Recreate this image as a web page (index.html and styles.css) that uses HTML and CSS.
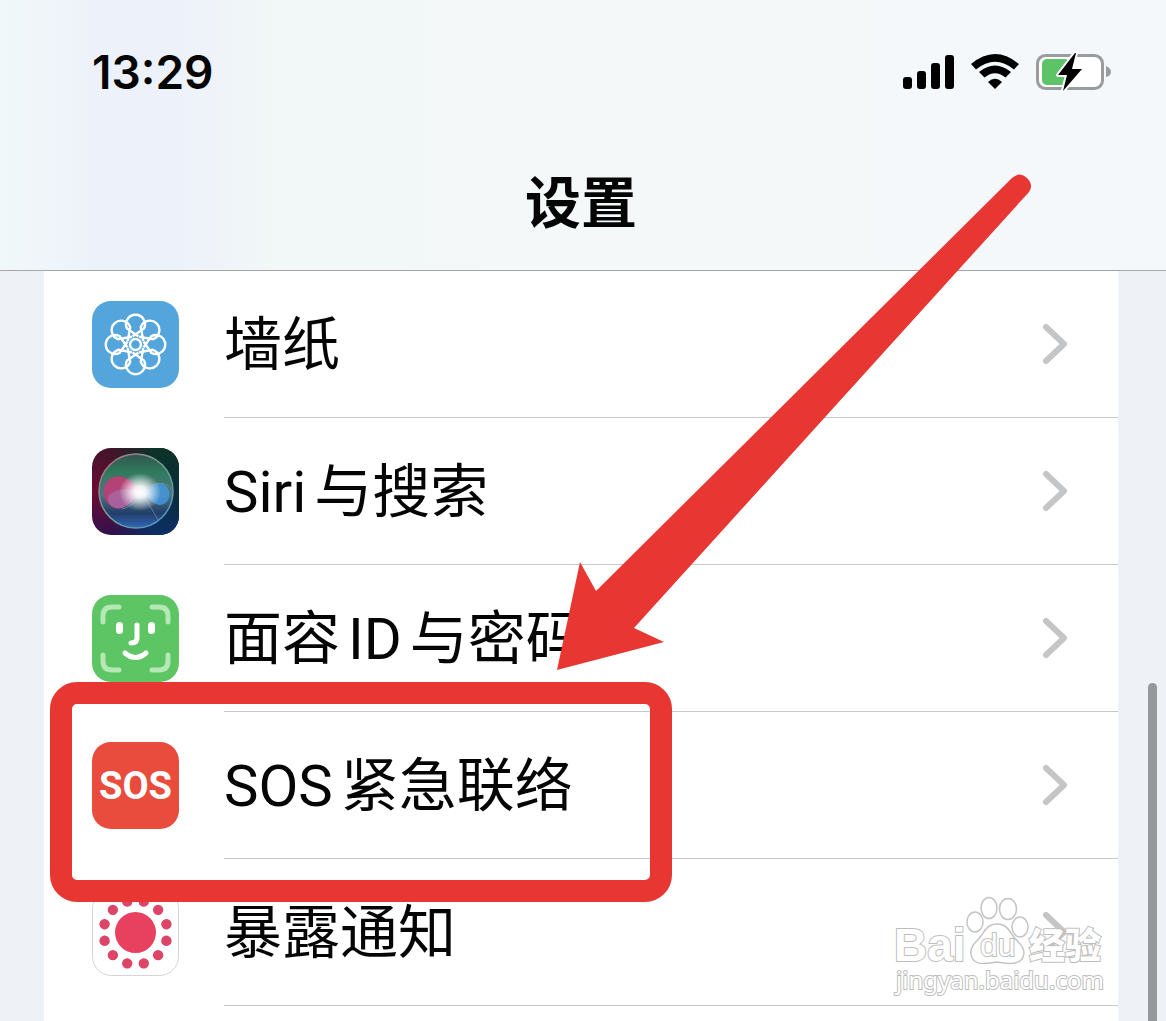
FILE: index.html
```html
<!DOCTYPE html>
<html lang="zh-CN">
<head>
  <meta charset="UTF-8">
  <title>设置</title>
  <link rel="stylesheet" href="styles.css">
</head>
<body>
  <div class="screen">

    <header class="header">
      <div class="status">
        <span class="time">13:29</span>
        <div class="status-icons">
          <svg class="signal" width="54" height="36" viewBox="0 0 54 36">
            <rect x="1" y="23" width="9" height="12" rx="3"/>
            <rect x="15" y="17" width="9" height="18" rx="3"/>
            <rect x="29" y="9" width="9" height="26" rx="3"/>
            <rect x="43" y="1" width="9" height="34" rx="3"/>
          </svg>
          <svg class="wifi" width="50" height="36" viewBox="0 0 50 36">
            <path d="M1 10Q25 -10 49 10L44 15.500Q25 0 6 15.500Z"/>
            <path d="M9 18Q25 5 41 18L35.500 23.500Q25 15 14.500 23.500Z"/>
            <path d="M18 28Q25 21.500 32 28L25 35Z"/>
          </svg>
          <svg class="battery" width="78" height="40" viewBox="0 0 78 40">
            <rect x="3.500" y="3.500" width="65" height="33" rx="8" fill="#fff" stroke="#999b9c" stroke-width="3"/>
            <rect x="8" y="7" width="28" height="26" rx="5" fill="#5cc466"/>
            <path d="M72 14q5 2 5 6t-5 5Z" fill="#999b9c"/>
            <path d="M41 1L24 23H33L29 39L48 17H38L42 1Z" fill="#000" stroke="#fff" stroke-width="4" paint-order="stroke" stroke-linejoin="round"/>
          </svg>
        </div>
      </div>
      <h1 class="title">设置</h1>
    </header>

    <nav class="list">
      <a class="row" href="#wallpaper">
        <svg class="icon" viewBox="0 0 87 87">
          <defs>
            <path id="petal" d="M3 -8L-8.500 -16A9.500 9.500 0 1 1 8.500 -16L-3 -8"/>
          </defs>
          <rect width="87" height="87" rx="19" fill="#54a5dc"/>
          <g transform="translate(43.500 43.500)" fill="none" stroke="#fff" stroke-width="2.400">
            <circle r="5.500"/>
            <use href="#petal"/>
            <use href="#petal" transform="rotate(45)"/>
            <use href="#petal" transform="rotate(90)"/>
            <use href="#petal" transform="rotate(135)"/>
            <use href="#petal" transform="rotate(180)"/>
            <use href="#petal" transform="rotate(225)"/>
            <use href="#petal" transform="rotate(270)"/>
            <use href="#petal" transform="rotate(315)"/>
          </g>
        </svg>
        <span class="label">
          <span>墙纸</span>
          <svg class="chevron" viewBox="0 0 26 42"><path d="M4 4L22 21L4 38"/></svg>
        </span>
      </a>

      <a class="row" href="#siri">
        <svg class="icon" viewBox="0 0 87 87">
          <defs>
            <linearGradient id="siriLeft" x1="0" y1="0" x2="0" y2="1">
              <stop offset="0" stop-color="#42142b"/>
              <stop offset="0.500" stop-color="#6b0d32"/>
              <stop offset="1" stop-color="#33104c"/>
            </linearGradient>
            <linearGradient id="siriRight" x1="0" y1="0" x2="0" y2="1">
              <stop offset="0" stop-color="#0c3328"/>
              <stop offset="0.550" stop-color="#0b2b39"/>
              <stop offset="1" stop-color="#0c2f68"/>
            </linearGradient>
            <linearGradient id="siriFade" x1="0" x2="1">
              <stop offset="0.200" stop-color="#000"/>
              <stop offset="0.700" stop-color="#fff"/>
            </linearGradient>
            <mask id="siriMask"><rect width="87" height="87" fill="url(#siriFade)"/></mask>
            <linearGradient id="siriOrb" x1="0" y1="0" x2="0" y2="1">
              <stop offset="0" stop-color="#31564e"/>
              <stop offset="0.250" stop-color="#2f7a5c"/>
              <stop offset="0.550" stop-color="#4f7482"/>
              <stop offset="0.800" stop-color="#213e69"/>
              <stop offset="1" stop-color="#3167b8"/>
            </linearGradient>
            <linearGradient id="siriRim" x1="0" y1="0" x2="1" y2="1">
              <stop offset="0" stop-color="#b56b83"/>
              <stop offset="0.500" stop-color="#72a391"/>
              <stop offset="1" stop-color="#4a93cf"/>
            </linearGradient>
            <radialGradient id="siriGlow">
              <stop offset="0" stop-color="#fff"/>
              <stop offset="0.300" stop-color="#fff" stop-opacity="0.900"/>
              <stop offset="1" stop-color="#fff" stop-opacity="0"/>
            </radialGradient>
          </defs>
          <rect width="87" height="87" rx="19" fill="url(#siriLeft)"/>
          <rect width="87" height="87" rx="19" fill="url(#siriRight)" mask="url(#siriMask)"/>
          <circle cx="44" cy="43" r="37" fill="url(#siriOrb)" stroke="url(#siriRim)" stroke-width="1.500"/>
          <path d="M48 44C38 26 21 24 14 35C7 48 18 64 30 60C39 57 44 49 48 44Z" fill="#c93875" opacity="0.850"/>
          <path d="M48 44C36 39 25 40 17 47C13 53 20 62 30 60C39 57 44 49 48 44Z" fill="#9b83bd" opacity="0.500"/>
          <path d="M48 44C58 42 63 33 71 36C82 41 78 58 67 57C59 55 55 48 48 44Z" fill="#4397dc" opacity="0.850"/>
          <path d="M30 61C42 58 47 48 50 44L66 72M50 44C67 29 77 37 79 41" fill="none" stroke="#8cb4c5" stroke-width="0.800" opacity="0.600"/>
          <ellipse cx="48" cy="44" rx="21" ry="19" fill="url(#siriGlow)"/>
        </svg>
        <span class="label">
          <span><span class="latin latin-start">Siri</span>与搜索</span>
          <svg class="chevron" viewBox="0 0 26 42"><path d="M4 4L22 21L4 38"/></svg>
        </span>
      </a>

      <a class="row" href="#faceid">
        <svg class="icon" viewBox="0 0 87 87">
          <rect width="87" height="87" rx="19" fill="#5ec564"/>
          <g fill="none" stroke-linecap="round" stroke-width="5">
            <path d="M11 27V21Q11 12 20 12H27M60 12H67Q76 12 76 21V27M76 60V66Q76 75 67 75H60M27 75H20Q11 75 11 66V60" stroke="#b4e8b4"/>
            <path d="M45 30V43Q45 48 39 48" stroke="#fff"/>
            <path d="M33 58Q43.500 67 54 58" stroke="#fff"/>
          </g>
          <rect x="24" y="27" width="7" height="12" rx="3.500" fill="#fff"/>
          <rect x="56" y="27" width="7" height="12" rx="3.500" fill="#fff"/>
        </svg>
        <span class="label">
          <span>面容<span class="latin latin-mid">ID</span>与密码</span>
          <svg class="chevron" viewBox="0 0 26 42"><path d="M4 4L22 21L4 38"/></svg>
        </span>
      </a>

      <a class="row" href="#sos">
        <span class="icon icon-sos">SOS</span>
        <span class="label">
          <span><span class="latin latin-start">SOS</span>紧急联络</span>
          <svg class="chevron" viewBox="0 0 26 42"><path d="M4 4L22 21L4 38"/></svg>
        </span>
      </a>

      <a class="row" href="#exposure">
        <svg class="icon" viewBox="0 0 87 87">
          <defs><circle id="dot" cx="32" r="5.200"/></defs>
          <rect x="0.500" y="0.500" width="86" height="86" rx="19" fill="#fff" stroke="#d3d6d8"/>
          <g transform="translate(43.500 43.500)" fill="#dc4566">
            <circle r="20.500" fill="#e8405f"/>
            <use href="#dot" transform="rotate(15)"/>
            <use href="#dot" transform="rotate(45)"/>
            <use href="#dot" transform="rotate(75)"/>
            <use href="#dot" transform="rotate(105)"/>
            <use href="#dot" transform="rotate(135)"/>
            <use href="#dot" transform="rotate(165)"/>
            <use href="#dot" transform="rotate(195)"/>
            <use href="#dot" transform="rotate(225)"/>
            <use href="#dot" transform="rotate(255)"/>
            <use href="#dot" transform="rotate(285)"/>
            <use href="#dot" transform="rotate(315)"/>
            <use href="#dot" transform="rotate(345)"/>
          </g>
        </svg>
        <span class="label">
          <span>暴露通知</span>
          <svg class="chevron" viewBox="0 0 26 42"><path d="M4 4L22 21L4 38"/></svg>
        </span>
      </a>
    </nav>

    <div class="scrollbar"></div>

    <!-- marks drawn over the list -->
    <div class="highlight"></div>
    <svg class="arrow" width="480" height="500" viewBox="0 0 480 500">
      <path d="M2 496L25 388L41 417L457 4Q465 -3 472 4Q479 11 474 18L79 454L109 468Z" fill="#e83732"/>
    </svg>

    <svg class="watermark" width="216" height="104" viewBox="0 0 216 104">
      <g class="wm-shape">
        <ellipse cx="81" cy="26" rx="8" ry="10"/>
        <ellipse cx="95" cy="12" rx="8" ry="10.500"/>
        <ellipse cx="114" cy="13" rx="8.500" ry="10.500"/>
        <ellipse cx="126" cy="31" rx="8" ry="10"/>
        <path d="M103 28C94 28 91 34 87 40C83 46 76 49 77 58C78 68 87 69 103 66C119 69 129 68 130 57C130 49 123 46 119 40C115 34 112 28 103 28Z"/>
      </g>
      <g class="wm-text">
        <text class="wm-bai" x="0" y="65">Bai</text>
        <text class="wm-du" x="86" y="60">du</text>
        <text class="wm-cn" x="135" y="63">经验</text>
        <text class="wm-url" x="2" y="93">jingyan.baidu.com</text>
      </g>
    </svg>

  </div>
</body>
</html>
```
FILE: styles.css
```css
* {
  box-sizing: border-box;
}
body {
  margin: 0;
  background: #eef2f6;
  color: #050505;
  font-family: Inter, "Noto Sans CJK SC", sans-serif;
}
.screen {
  position: relative;
  height: 100vh;
  overflow: hidden;
}

/* header */
.header {
  height: 271px;
  padding: 44px 54px 0 92px;
  border-bottom: 1px solid #a3a6a8;
  background: linear-gradient(to right, #f1f8f9 0%, #edf2fa 8%, #edf1fa 15%, #f2f7f7 24%, #f4f8f9 50%, #f4f8fa 100%);
}
.status {
  display: flex;
  justify-content: space-between;
  align-items: center;
  height: 55px;
}
.time {
  font-size: 46px;
  font-weight: 600;
}
.status-icons {
  display: flex;
  align-items: center;
  gap: 14px;
}
.title {
  margin: 62px 42px 0 0;
  font-size: 56px;
  line-height: 84px;
  font-weight: 700;
  text-align: center;
}

/* settings list */
.list {
  margin: 0 48px 0 44px;
  background: #fff;
  height: 100%;
}
.row {
  display: flex;
  align-items: center;
  gap: 45px;
  height: 147px;
  padding-left: 48px;
  color: inherit;
  text-decoration: none;
}
.icon {
  flex: none;
  width: 87px;
  height: 87px;
}
.icon-sos {
  display: flex;
  align-items: center;
  justify-content: center;
  border-radius: 19px;
  background: #e94b3c;
  color: #fff;
  font-family: "Liberation Sans Narrow", Roboto, sans-serif;
  font-size: 38px;
  font-weight: 700;
}
.label {
  flex: 1;
  display: flex;
  align-items: center;
  justify-content: space-between;
  height: 100%;
  padding-right: 50px;
  border-bottom: 1px solid #c6c8ca;
  font-size: 58px;
  line-height: 84px;
  white-space: nowrap;
}
.latin {
  font-family: Roboto, sans-serif;
}
.latin-start {
  margin-right: 8px;
}
.latin-mid {
  margin: 0 8px;
}
.chevron {
  width: 26px;
  height: 42px;
  fill: none;
  stroke: #c4c5c6;
  stroke-width: 6;
  stroke-linecap: round;
  stroke-linejoin: round;
}

/* overlays */
.scrollbar {
  position: absolute;
  top: 683px;
  right: 9px;
  bottom: -10px;
  width: 9px;
  border-radius: 5px;
  background: #96999c;
}
.highlight {
  position: absolute;
  top: 682px;
  left: 50px;
  width: 622px;
  height: 220px;
  border: 22px solid #e83732;
  border-radius: 27px;
}
.arrow {
  position: absolute;
  top: 174px;
  left: 555px;
}
.watermark {
  position: absolute;
  right: 56px;
  bottom: 21px;
  overflow: visible;
}
.wm-shape {
  fill: #fff;
  stroke: #c4c4c4;
  stroke-width: 1.5;
}
.wm-text {
  fill: #fff;
  stroke: #bdbdbd;
  stroke-width: 2;
  paint-order: stroke;
  font-family: "Liberation Sans", "Noto Sans CJK SC", sans-serif;
}
.wm-bai {
  font-size: 46px;
  font-weight: 700;
}
.wm-du {
  font-size: 32px;
}
.wm-cn {
  font-size: 36px;
  font-weight: 900;
}
.wm-url {
  font-family: "Noto Sans", sans-serif;
  font-size: 24px;
}
```
